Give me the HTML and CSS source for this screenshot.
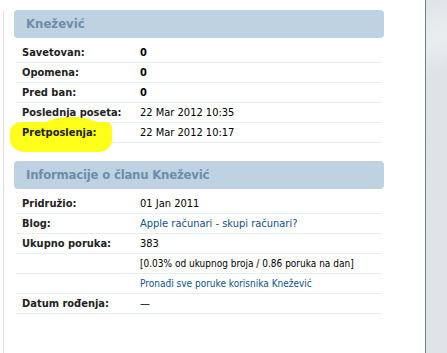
FILE: index.html
```html
<!DOCTYPE html>
<html lang="sr">
<head>
  <meta charset="UTF-8" />
  <title>Knežević</title>
  <link rel="stylesheet" href="styles.css">
</head>
<body>
<div class="page">
  <div class="main">
    <div class="section">
      <div class="head">Knežević</div>
      <table class="info">
        <tr><td class="lbl">Savetovan:</td><td class="val strong">0</td></tr>
        <tr><td class="lbl">Opomena:</td><td class="val strong">0</td></tr>
        <tr><td class="lbl">Pred ban:</td><td class="val strong">0</td></tr>
        <tr><td class="lbl">Poslednja poseta:</td><td class="val">22 Mar 2012 10:35</td></tr>
        <tr><td class="lbl"><span class="marker"></span><span class="marker bump"></span><span class="txt">Pretposlenja:</span></td><td class="val">22 Mar 2012 10:17</td></tr>
      </table>
    </div>

    <div class="section second">
      <div class="head">Informacije o članu Knežević</div>
      <table class="info">
        <tr><td class="lbl">Pridružio:</td><td class="val">01 Jan 2011</td></tr>
        <tr><td class="lbl">Blog:</td><td class="val"><a href="#">Apple računari - skupi računari?</a></td></tr>
        <tr><td class="lbl">Ukupno poruka:</td><td class="val">383</td></tr>
        <tr><td class="lbl"></td><td class="val small">[0.03% od ukupnog broja / 0.86 poruka na dan]</td></tr>
        <tr><td class="lbl"></td><td class="val small"><a href="#">Pronađi sve poruke korisnika Knežević</a></td></tr>
        <tr><td class="lbl">Datum rođenja:</td><td class="val">—</td></tr>
      </table>
    </div>
  </div>
  <div class="side"></div>
</div>
</body>
</html>
```

FILE: styles.css
```css
body {
  margin: 0;
  background: #fff;
  font-family: "DejaVu Sans Condensed", "DejaVu Sans", sans-serif;
  font-size: 11px;
  color: #000;
}
.page {
  display: flex;
  height: 353px;
  overflow: hidden;
}
.main {
  width: 422px;
  margin-left: 3px;
  margin-top: 10px;
  border-left: 1px solid #e0e0e0;
  padding-left: 10px;
  box-sizing: border-box;
}
.side {
  width: 21px;
  margin-left: 1px;
  border-left: 1px solid #5f82a6;
  background: linear-gradient(155deg, #e0e4e9 0%, #eaedf0 12%, #dfe3e8 22%, #e0e4e8 100%);
}
.section {
  width: 370px;
}
.second {
  margin-top: 18px;
}
.head {
  height: 28px;
  line-height: 28px;
  background: #bfd2e1;
  border-radius: 4px;
  padding-left: 12px;
  font-size: 13px;
  font-weight: bold;
  color: #6f8cab;
  margin-bottom: 5px;
}
.second .head {
  letter-spacing: -0.2px;
}
.info {
  width: 366px;
  margin: 0 2px;
  border-collapse: collapse;
}
.info td {
  height: 19px;
  padding: 0;
  border-bottom: 1px solid #e6eeee;
  vertical-align: middle;
}
.lbl {
  width: 118px;
  padding-left: 6px !important;
  font-weight: bold;
  color: #222;
  position: relative;
}
.val.strong {
  font-weight: bold;
}
.val.small {
  font-size: 10px;
}
.val a {
  color: #105289;
  text-decoration: none;
}
.txt {
  position: relative;
}
.marker {
  position: absolute;
  left: -6px;
  top: -1px;
  width: 102px;
  height: 30px;
  background: #ffff1a;
  border-radius: 12px 6px 14px 16px / 10px 6px 12px 12px;
}
.marker.bump {
  left: 24px;
  top: -6px;
  width: 62px;
  height: 12px;
  border-radius: 50% 50% 0 0 / 100% 100% 0 0;
}
```
